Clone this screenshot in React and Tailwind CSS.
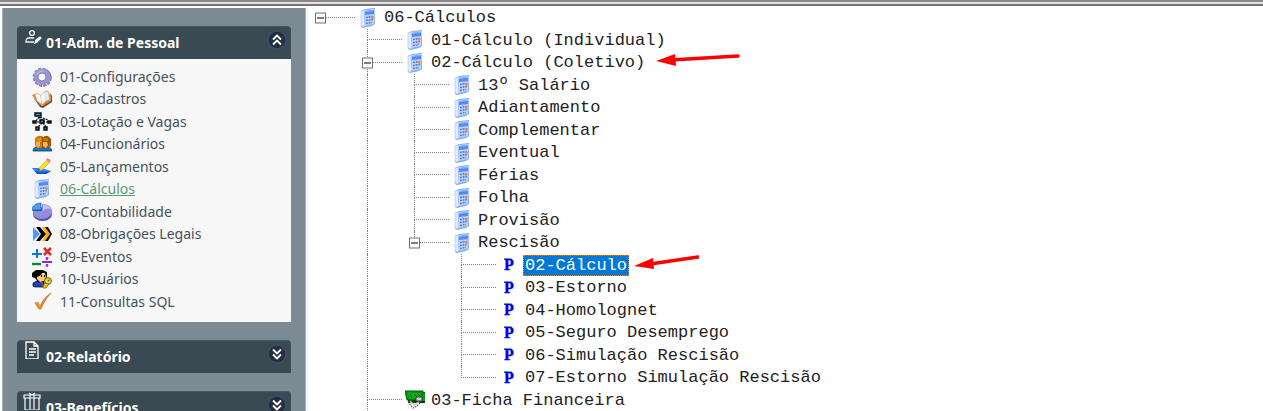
import { useState } from "react";
import clsx from "clsx";

const menu = [
  { label: "01-Configurações", icon: GearIcon },
  { label: "02-Cadastros", icon: BookIcon },
  { label: "03-Lotação e Vagas", icon: OrgIcon },
  { label: "04-Funcionários", icon: PeopleIcon },
  { label: "05-Lançamentos", icon: PencilIcon },
  { label: "06-Cálculos", icon: CalcIcon },
  { label: "07-Contabilidade", icon: PieIcon },
  { label: "08-Obrigações Legais", icon: ArrowsIcon },
  { label: "09-Eventos", icon: MathIcon },
  { label: "10-Usuários", icon: UserKeyIcon },
  { label: "11-Consultas SQL", icon: CheckIcon },
];

const tree = [
  {
    label: "06-Cálculos",
    children: [
      { label: "01-Cálculo (Individual)" },
      {
        label: "02-Cálculo (Coletivo)",
        arrow: "flat",
        children: [
          { label: "13º Salário" },
          { label: "Adiantamento" },
          { label: "Complementar" },
          { label: "Eventual" },
          { label: "Férias" },
          { label: "Folha" },
          { label: "Provisão" },
          {
            label: "Rescisão",
            children: [
              { label: "02-Cálculo", icon: ProgramIcon, arrow: "steep" },
              { label: "03-Estorno", icon: ProgramIcon },
              { label: "04-Homolognet", icon: ProgramIcon },
              { label: "05-Seguro Desemprego", icon: ProgramIcon },
              { label: "06-Simulação Rescisão", icon: ProgramIcon },
              { label: "07-Estorno Simulação Rescisão", icon: ProgramIcon },
            ],
          },
        ],
      },
      // more siblings follow below the fold
      { label: "03-Ficha Financeira", icon: MoneyIcon, more: true },
    ],
  },
];

// Turns the nested nodes into rows; guides[k] tells if level k keeps its vertical line
function flatten(nodes, collapsed, guides = [], path = "") {
  return nodes.flatMap((node, i) => {
    const id = path + "/" + node.label;
    const last = i === nodes.length - 1 && !node.more;
    const row = { ...node, id, guides, last };
    if (!node.children || collapsed[id]) return [row];
    const next = [...guides, guides.length > 0 && !last];
    return [row, ...flatten(node.children, collapsed, next, id)];
  });
}

function GearIcon() {
  return (
    <svg viewBox="0 0 20 20" className="size-5">
      <circle cx="10.6" cy="10.8" r="7.4" fill="none" stroke="#77778c" strokeWidth="3.4" strokeDasharray="2.8 1.2" />
      <circle cx="10" cy="10" r="8" fill="none" stroke="#8583bd" strokeWidth="2.6" strokeDasharray="2.9 1.3" />
      <circle cx="10" cy="10" r="6" fill="none" stroke="#9b98cf" strokeWidth="4.4" />
      <circle cx="10" cy="10" r="4" fill="#f7f7f7" stroke="#6d6b9c" strokeWidth="0.8" />
      <path d="M4.6 8A6 6 0 0 1 12 4.5" fill="none" stroke="#b9b6e3" strokeWidth="1.4" />
    </svg>
  );
}

function BookIcon() {
  return (
    <svg viewBox="0 0 20 20" className="size-5">
      <path d="M1 8l7 10 3 1 9-6V7l-2-3 1 7-9 6z" fill="#5d4a45" />
      <path d="M0 6l3-1 6 10 7-4 2-8 1 9-8 5-3-1z" fill="#e9832c" />
      <path d="M3 5c3-1 5 0 6 2l1 9c-2-2-3-3-5-4z" fill="#fff" stroke="#e2935a" strokeWidth="0.7" />
      <path d="M9 7c1-3 4-5 7-5l2 9c-3 0-6 2-8 5z" fill="#d5f0fb" stroke="#e08b4a" strokeWidth="0.7" />
      <path d="M9 7c1-2 2-3 3-3l1 8-3 4z" fill="#fff" />
    </svg>
  );
}

function OrgIcon() {
  return (
    <svg viewBox="0 0 20 20" className="size-5">
      <path d="M7 5L4 9M7 5l4 4M8 5l8 3M5 10h11M10 11l-4 4M11 11l3 4" stroke="#000" strokeWidth="1.2" strokeDasharray="2 1" fill="none" />
      <g fill="#16a0d8" stroke="#000" strokeWidth="1.4">
        <rect x="3" y="1" width="6" height="3" />
        <rect x="1" y="9" width="3" height="2" />
        <rect x="8" y="8" width="4" height="3" />
        <rect x="16" y="9" width="3" height="2" />
        <rect x="4" y="15" width="3" height="3" />
        <rect x="12" y="15" width="3" height="3" />
      </g>
    </svg>
  );
}

function PeopleIcon() {
  return (
    <svg viewBox="0 0 20 20" className="size-5">
      <path d="M1 17c0-3 2-4 5-4h8c3 0 6 1 6 4z" fill="#1a76b8" stroke="#143a5c" strokeWidth="0.8" />
      <path d="M3 4l3-2h4l2 2v8l-3 2H5l-2-3z" fill="#c97708" />
      <path d="M10 4l3-2h3l3 3v7l-3 2h-4l-2-2z" fill="#9c5408" />
      <path d="M4 8h4v4l-2 2-2-3z" fill="#f5b04e" />
      <path d="M11 8h4l1 3-2 3-3-2z" fill="#f6b452" />
      <path d="M4 4h5v4H6z" fill="#e18f16" />
      <path d="M11 4h5v3h-4z" fill="#c8750c" />
    </svg>
  );
}

function PencilIcon() {
  return (
    <svg viewBox="0 0 20 20" className="size-5">
      <path d="M0 11h9l10 3-5 3H5z" fill="#1e86ff" />
      <path d="M3 14l2 3h9l5-3-7 1z" fill="#1551e8" />
      <path d="M6 14l2-4 7-7 3 2-8 8z" fill="#ffdf1e" stroke="#c29a18" strokeWidth="0.5" />
      <path d="M14 3l1-2 4 2-2 3z" fill="#f08a80" />
      <path d="M6 14l1-2 1 1z" fill="#222" />
    </svg>
  );
}

function CalcIcon() {
  return (
    <svg viewBox="0 0 16 20" className="h-5 w-4">
      <path d="M1 3l4-2 10-1v16l-3 2-9 2-2-1z" fill="#86abec" />
      <path d="M4 2l11-1-1 15-9 2z" fill="#b9d2fc" />
      <path d="M1 3l3-1 1 16-2 1-2-1z" fill="#dfeaff" stroke="#9ab8ee" strokeWidth="0.5" />
      <path d="M5 3l9-1v4l-9 1z" fill="#4d8cf0" />
      <path d="M5 3l9-1v1L5 4z" fill="#86b6ff" />
      <path d="M6 9.5l7-1M6 12.5l7-1M6 15.500l6-1" stroke="#5b7cc6" strokeWidth="1.6" strokeDasharray="1.800 0.9" />
      <rect x="11" y="8" width="2.5" height="2.5" fill="#f0803a" />
    </svg>
  );
}

function PieIcon() {
  return (
    <svg viewBox="0 0 20 20" className="size-5">
      <ellipse cx="10.5" cy="12" rx="9.5" ry="7" fill="#50509e" />
      <path d="M10 9V2c6 0 10 3 10 7s-4 8-10 8S1 14 1 9z" fill="#908ee0" />
      <path d="M11 9V3c4 0 8 2 8 5-2-2-5-2-8 1z" fill="#c5c4fa" />
      <path d="M9 8V1C4 1 0 4 0 8z" fill="#4b9eee" stroke="#2564ae" strokeWidth="0.8" />
      <path d="M0 8h9v1H1z" fill="#1f5698" />
    </svg>
  );
}

function ArrowsIcon() {
  return (
    <svg viewBox="0 0 20 20" className="size-5">
      <path d="M1 3l7 7-7 7z" fill="#5599f8" />
      <path d="M12 3h4l4 7-4 7h-4l4-7z" fill="#111" />
      <path d="M10 3h3l5 7-5 7h-3l4-7z" fill="#ffab20" />
      <path d="M4 3h4l6 7-6 7H4l5-7z" fill="#000" />
    </svg>
  );
}

function MathIcon() {
  return (
    <svg viewBox="0 0 20 20" className="size-5">
      <path d="M5 2v9M0 7h10" stroke="#1872d2" strokeWidth="2" />
      <path d="M12 1l7 7M19 1l-7 7" stroke="#d82a2a" strokeWidth="2.6" />
      <path d="M0 17h9" stroke="#168238" strokeWidth="2.4" />
      <path d="M10 15h10" stroke="#9c24cf" strokeWidth="2" />
      <circle cx="15" cy="11.5" r="1.4" fill="#9c24cf" />
      <circle cx="15" cy="18.5" r="1.4" fill="#9c24cf" />
    </svg>
  );
}

function UserKeyIcon() {
  return (
    <svg viewBox="0 0 20 20" className="size-5">
      <path d="M0 4l4-3h7l4 2v5l-3 5H6L3 9 0 8z" fill="#050505" />
      <path d="M5 8l4-2 1-2h3l1 4-2 4-4 1-3-3z" fill="#ffc67e" />
      <path d="M9 6h1v2H9zM12 6h1v2h-1z" fill="#000" />
      <path d="M1 14l4-2 4 2 3-1v5H3l-2-1z" fill="#1443db" stroke="#000" strokeWidth="0.7" />
      <path d="M8 14l3 3 1-2z" fill="#e32920" />
      <circle cx="16" cy="12" r="3.4" fill="#f3dc36" stroke="#735f0c" />
      <path d="M13 14l-2 3v2h3l3-4z" fill="#e4c62a" stroke="#735f0c" strokeWidth="0.8" />
      <circle cx="16.5" cy="11.5" r="1" fill="#735f0c" />
    </svg>
  );
}

function CheckIcon() {
  return (
    <svg viewBox="0 0 20 20" className="size-5">
      <path d="M3 11l3-1 2 4c3-6 6-10 11-13-4 4-7 9-10 16H7z" fill="#dd8828" stroke="#b56a22" strokeWidth="0.6" />
      <path d="M4 11l2-.5L8 15" fill="none" stroke="#f5b45f" strokeWidth="0.8" />
    </svg>
  );
}

function ProgramIcon() {
  return (
    <svg viewBox="0 0 16 20" className="h-5 w-4">
      <path d="M3 4h8" stroke="#0a8a1e" strokeWidth="1" />
      <text
        x="3"
        y="15"
        fill="#0000f0"
        stroke="#0000f0"
        strokeWidth="0.4"
        fontFamily="Liberation Serif, serif"
        fontWeight="700"
        fontSize="16"
      >
        P
      </text>
    </svg>
  );
}

function MoneyIcon() {
  return (
    <svg viewBox="0 0 20 20" className="-mx-[2px] h-5 w-5">
      <path d="M3 2h17v11H3z" fill="#043b08" />
      <path d="M0 1h18v9H2z" fill="#079a12" stroke="#045c0a" />
      <path d="M18 3h2v8h-3z" fill="#0aa318" />
      <path d="M3 3h12v6H5z" fill="#0bb31b" />
      <path d="M5 4l2 4M9 4l3 3M12 3l3 3" stroke="#034d08" strokeWidth="0.9" />
      <path d="M11 7h6v4h-6z" fill="#c9d3c9" stroke="#222" strokeWidth="0.8" />
      <path d="M3 12l5 6 4-2 5-5" fill="none" stroke="#555" strokeWidth="1.2" strokeDasharray="1.5 1" />
      <path d="M5 11l4 4 5-3" fill="none" stroke="#c4c4c4" strokeWidth="1.5" />
    </svg>
  );
}

function PersonEditIcon() {
  return (
    <svg viewBox="0 0 18 18" className="h-[18px] w-[18px]" fill="none" stroke="#eef2f4" strokeWidth="1.3">
      <circle cx="7" cy="6" r="2.4" />
      <path d="M9 11H4c-2 0-3 1-3 4h8" />
      <path d="M10 16l1-3 4-3 1 1-4 4z" fill="#eef2f4" />
    </svg>
  );
}

function PageIcon() {
  return (
    <svg viewBox="0 0 18 18" className="h-[18px] w-[18px]" fill="none" stroke="#fff" strokeWidth="1.3">
      <path d="M1 1h8l4 4v13H1zM9 1v4h4M4 8h7M4 11h7M4 14h5" />
    </svg>
  );
}

function GiftIcon() {
  return (
    <svg viewBox="0 0 18 18" className="-ml-[2px] mr-[2px] h-[18px] w-[18px]" fill="none" stroke="#fff" strokeWidth="1.2">
      <path d="M1 3h16v3H1zM2 6v12h14V6M7 3v14M11 3v14M9 3L6 1M9 3l3-2" />
    </svg>
  );
}

function Chevrons({ open }) {
  return (
    <svg viewBox="0 0 20 20" className={clsx("size-5", open && "rotate-180")}>
      <circle cx="10" cy="10" r="9" fill="#232f3f" stroke="#3c4e66" strokeWidth="1.5" />
      <path d="M6 5.5l4 4 4-4M6 10.5l4 4 4-4" fill="none" stroke="#fff" strokeWidth="1.8" />
    </svg>
  );
}

function RedArrow({ kind }) {
  if (kind === "flat") {
    return (
      <svg viewBox="0 0 86 22" className="ml-2 h-[22px] w-[86px] shrink-0">
        <path d="M16 8L83 4" stroke="#f00" strokeWidth="3.5" strokeLinecap="round" />
        <path d="M1 9L20 2l1 12z" fill="#f00" />
      </svg>
    );
  }
  return (
    <svg viewBox="0 0 66 22" className="ml-1 h-[22px] w-[66px] shrink-0">
      <path d="M17 10L65 3" stroke="#f00" strokeWidth="3.5" strokeLinecap="round" />
      <path d="M1 12L20 4l1 11z" fill="#f00" />
    </svg>
  );
}

function Panel({ title, icon: Icon, open, onToggle, children }) {
  return (
    <section>
      <button
        type="button"
        onClick={onToggle}
        aria-expanded={open}
        className="flex h-[33px] w-full items-center rounded-t-[4px] border-t border-[#465760] bg-[#394a52] pr-1 pl-2 text-left"
      >
        <span className="mr-[3px] self-start">
          <Icon />
        </span>
        <span className="flex-1 text-sm font-bold text-white">{title}</span>
        <span className="self-start pt-[3px]">
          <Chevrons open={open} />
        </span>
      </button>
      {open && children}
    </section>
  );
}

function TreeRow({ row, open, selected, onToggle, onSelect }) {
  const Icon = row.icon || CalcIcon;
  const root = row.guides.length === 0;

  return (
    <li className="flex items-center odd:h-[23px] even:h-[22px]">
      {row.guides.map((on, i) => (
        <span
          key={i}
          className={clsx("h-full w-[47px] shrink-0", on && "border-l border-dotted border-[#808080]")}
        />
      ))}
      <span className="relative mr-[5px] flex h-full w-[35px] shrink-0 flex-col">
        <span className={clsx("h-1/2 border-b border-dotted border-[#808080]", !root && "border-l")} />
        <span className={clsx("h-1/2 border-dotted border-[#808080]", !root && !row.last && "border-l")} />
        {row.children && (
          <button
            type="button"
            onClick={onToggle}
            aria-label={row.label}
            aria-expanded={open}
            className="absolute top-1/2 -left-[5px] flex size-[11px] -translate-y-1/2 items-center justify-center border border-[#707070] bg-white"
          >
            <span className="h-px w-[7px] bg-black" />
            {!open && <span className="absolute h-[7px] w-px bg-black" />}
          </button>
        )}
      </span>
      <span className="mr-[6px] shrink-0">
        <Icon />
      </span>
      <button
        type="button"
        onClick={onSelect}
        className={clsx(
          "h-[21px] border px-px leading-5 whitespace-nowrap",
          selected ? "border-dotted border-[#d98a3c] bg-[#0078d7] text-white" : "border-transparent text-[#222]"
        )}
      >
        {row.label}
      </button>
      {row.arrow && <RedArrow kind={row.arrow} />}
    </li>
  );
}

export default function App() {
  const [panel, setPanel] = useState("adm");
  const [active, setActive] = useState("06-Cálculos");
  const [collapsed, setCollapsed] = useState({});
  const [selected, setSelected] = useState("/06-Cálculos/02-Cálculo (Coletivo)/Rescisão/02-Cálculo");

  const toggle = (name) => setPanel((p) => (p === name ? "" : name));

  return (
    <div className="flex h-screen flex-col overflow-hidden bg-white">
      <div className="h-[6px] shrink-0 border-t-2 border-b-2 border-t-[#8b8789] border-b-[#777375] bg-[#e6e2e4]" />

      <div className="flex min-h-0 flex-1">
        <aside className="mt-[2px] ml-[2px] flex w-[304px] shrink-0 flex-col gap-[18px] border-x border-[#a3aeb5] bg-[#7c8a94] px-[14px] pt-[18px] font-['Noto_Sans','Open_Sans',sans-serif]">
          <Panel title="01-Adm. de Pessoal" icon={PersonEditIcon} open={panel === "adm"} onToggle={() => toggle("adm")}>
            <ul className="bg-[#f7f7f7] pt-[6px] pb-[9px] pl-[15px]">
              {menu.map(({ label, icon: Icon }) => (
                <li key={label} className="flex items-center odd:h-[23px] even:h-[22px]">
                  <a
                    href="#"
                    onClick={() => setActive(label)}
                    className={clsx(
                      "flex items-center gap-2 text-sm leading-5",
                      active === label ? "text-[#5a9a72] underline" : "text-[#44525c]"
                    )}
                  >
                    <span className="flex w-5 justify-center">
                      <Icon />
                    </span>
                    {label}
                  </a>
                </li>
              ))}
            </ul>
          </Panel>
          <Panel title="02-Relatório" icon={PageIcon} open={panel === "rel"} onToggle={() => toggle("rel")} />
          <Panel title="03-Benefícios" icon={GiftIcon} open={panel === "ben"} onToggle={() => toggle("ben")} />
        </aside>

        <main className="min-w-0 flex-1 overflow-hidden border-l-2 border-[#fbf4fa] pl-3 font-['Liberation_Mono',monospace] text-[17px]">
          <ul>
            {flatten(tree, collapsed).map((row) => (
              <TreeRow
                key={row.id}
                row={row}
                open={!collapsed[row.id]}
                selected={selected === row.id}
                onToggle={() => setCollapsed((c) => ({ ...c, [row.id]: !c[row.id] }))}
                onSelect={() => setSelected(row.id)}
              />
            ))}
          </ul>
        </main>
      </div>
    </div>
  );
}
